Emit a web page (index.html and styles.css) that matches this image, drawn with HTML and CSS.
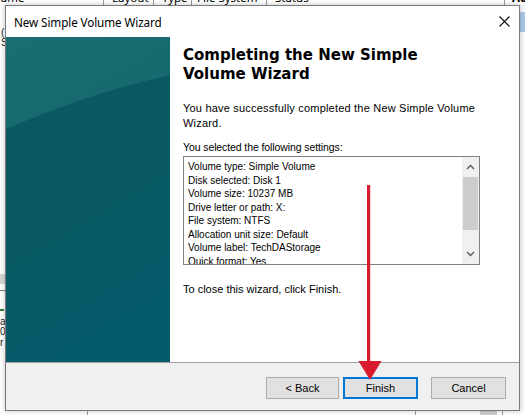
FILE: index.html
```html
<!DOCTYPE html>
<html>
<head>
<meta charset="utf-8">
<title>New Simple Volume Wizard</title>
<link rel="stylesheet" href="styles.css">
</head>
<body>
<div class="backdrop">
  <div class="lv-header">
    <div class="col c-name">Name</div>
    <div class="col c-layout">Layout</div>
    <div class="col c-type">Type</div>
    <div class="col c-fs">File System</div>
    <div class="col c-status">Status</div>
    <div class="col c-ac">Ac</div>
  </div>
  <div class="lv-body">
    <div class="left-strip">
      <span class="frag f-paren">(</span>
      <span class="frag f-s">S</span>
      <div class="gray-band"></div>
      <div class="dark-line"></div>
      <div class="green-dash"></div>
      <span class="frag f-a">a</span>
      <span class="frag f-0">0.</span>
      <span class="frag f-r">r</span>
    </div>
    <div class="center-fill"></div>
    <div class="right-strip">
      <div class="sel"></div>
    </div>
  </div>
  <div class="lv-bottom">
    <div class="bcell b1"></div>
    <div class="bcell b2"></div>
    <div class="bcell b3"><div class="bblock"></div></div>
    <div class="bcell b4"></div>
  </div>
</div>

<div class="dialog">
  <div class="titlebar">
    <span class="title">New Simple Volume Wizard</span>
    <svg class="close" width="11" height="11" viewBox="0 0 11 11">
      <path d="M0.5 0.5 L10.5 10.5 M10.5 0.5 L0.5 10.5" stroke="#111" stroke-width="1.1" fill="none"/>
    </svg>
  </div>
  <div class="main">
    <div class="side">
      <svg width="164" height="325" viewBox="0 0 164 325">
        <defs>
          <linearGradient id="lower" x1="0" y1="0" x2="0.3" y2="1">
            <stop offset="0" stop-color="#0c5962"/>
            <stop offset="0.6" stop-color="#085963"/>
            <stop offset="1" stop-color="#065b6b"/>
          </linearGradient>
          <linearGradient id="upper" x1="0" y1="0" x2="1" y2="1">
            <stop offset="0" stop-color="#1a6e72"/>
            <stop offset="1" stop-color="#15686d"/>
          </linearGradient>
        </defs>
        <rect width="164" height="325" fill="url(#lower)"/>
        <path d="M0 0 H164 V38 C120 48 70 62 0 92 Z" fill="url(#upper)"/>
      </svg>
    </div>
    <div class="content">
      <h1 class="heading">Completing the New Simple<br>Volume Wizard</h1>
      <p class="text p-done">You have successfully completed the New Simple Volume Wizard.</p>
      <p class="text p-sel">You selected the following settings:</p>
      <div class="listbox">
        <div class="items">
          <div>Volume type: Simple Volume</div>
          <div>Disk selected: Disk 1</div>
          <div>Volume size: 10237 MB</div>
          <div>Drive letter or path: X:</div>
          <div>File system: NTFS</div>
          <div>Allocation unit size: Default</div>
          <div>Volume label: TechDAStorage</div>
          <div>Quick format: Yes</div>
        </div>
        <div class="scrollbar">
          <div class="sb-btn">
            <svg width="9" height="6" viewBox="0 0 9 6"><path d="M1 5 L4.5 1.5 L8 5" stroke="#5a5a5a" stroke-width="1.4" fill="none"/></svg>
          </div>
          <div class="sb-track"><div class="sb-thumb"></div></div>
          <div class="sb-btn">
            <svg width="9" height="6" viewBox="0 0 9 6"><path d="M1 1 L4.5 4.5 L8 1" stroke="#5a5a5a" stroke-width="1.4" fill="none"/></svg>
          </div>
        </div>
      </div>
      <p class="text p-close">To close this wizard, click Finish.</p>
    </div>
  </div>
  <div class="footer">
    <button class="btn btn-back">&lt; Back</button>
    <button class="btn btn-finish">Finish</button>
    <button class="btn btn-cancel">Cancel</button>
  </div>
</div>

<svg class="arrow" width="525" height="415" viewBox="0 0 525 415">
  <rect x="367" y="185" width="3.2" height="178" fill="#d81c2e"/>
  <polygon points="358.5,361 381.5,361 370,380" fill="#d81c2e"/>
</svg>
</body>
</html>
```

FILE: styles.css
```css
html, body {
  margin: 0;
  padding: 0;
}

body {
  width: 525px;
  height: 415px;
  overflow: hidden;
  position: relative;
  background: #ffffff;
  font-family: "Liberation Sans", Arial, sans-serif;
}

/* ---------- background application window ---------- */
.backdrop {
  width: 525px;
  height: 415px;
  display: flex;
  flex-direction: column;
}

.lv-header {
  height: 5px;
  flex: none;
  display: flex;
  align-items: flex-end;
  overflow: hidden;
  background: #ffffff;
  font-family: "Noto Sans", "Open Sans", sans-serif;
  font-size: 11.5px;
  line-height: 14px;
  color: #000;
}

.col {
  flex: none;
  height: 14px;
  border-right: 1px solid #9a9a9a;
  box-sizing: border-box;
  white-space: nowrap;
  overflow: hidden;
}

.c-name { width: 112px; margin-left: -8px; }
.c-layout { width: 50px; padding-left: 8px; }
.c-type { width: 38px; padding-left: 8px; }
.c-fs { width: 75px; padding-left: 5px; }
.c-status { width: 238px; padding-left: 8px; }
.c-ac { width: 30px; padding-left: 7px; border-right: none; font-weight: bold; }

.lv-body {
  flex: 1;
  display: flex;
}

.left-strip {
  width: 5px;
  flex: none;
  display: flex;
  flex-direction: column;
  overflow: hidden;
  font-size: 10px;
  line-height: 10px;
  color: #222;
}

.frag { display: block; white-space: nowrap; }
.f-paren { margin-top: 23px; margin-left: 1px; }
.f-s { margin-top: 0; margin-left: 1px; }
.gray-band { height: 10px; background: #d6d6d6; margin-top: 226px; }
.dark-line { height: 1px; background: #777; margin-top: 6px; }
.green-dash { height: 2px; width: 4px; background: #2e7d32; margin-top: 18px; }
.f-a { margin-top: 6px; }
.f-0 { margin-top: 0; }
.f-r { margin-top: 1px; }

.center-fill { flex: 1; }

.right-strip {
  width: 5px;
  flex: none;
  background: #fafafa;
}

.sel {
  height: 20px;
  margin-top: 7px;
  background: #a9c8e8;
}

.lv-bottom {
  height: 5px;
  flex: none;
  display: flex;
  background: #fff;
}

.bcell {
  box-sizing: border-box;
  border-right: 1px solid #9c9c9c;
}
.b1 { width: 88px; }
.b2 { width: 328px; }
.b3 { width: 87px; display: flex; justify-content: flex-end; }
.bblock { width: 17px; margin-right: 5px; background: #cfcfcf; }
.b4 { flex: 1; border-right: none; }

/* ---------- wizard dialog ---------- */
.dialog {
  position: absolute;
  left: 5px;
  top: 5px;
  width: 513px;
  height: 404px;
  border: 1px solid #7a7a7a;
  background: #ffffff;
  display: flex;
  flex-direction: column;
  box-shadow: 0 0 5px rgba(0, 0, 0, 0.25);
}

.titlebar {
  height: 31px;
  flex: none;
  display: flex;
  align-items: center;
  justify-content: space-between;
  padding-left: 8px;
  background: #ffffff;
}

.title {
  font-family: "Noto Sans", "Open Sans", sans-serif;
  font-size: 11.7px;
  color: #000;
  letter-spacing: -0.1px;
}

.close {
  margin-right: 9px;
}

.main {
  height: 325px;
  flex: none;
  display: flex;
}

.side {
  width: 164px;
  flex: none;
  height: 325px;
}

.side svg { display: block; }

.content {
  flex: 1;
  padding: 9px 0 0 13px;
  background: #ffffff;
}

.heading {
  margin: 0;
  font-family: "DejaVu Sans", Verdana, sans-serif;
  font-weight: bold;
  font-size: 15px;
  line-height: 19px;
  color: #000;
}

.text {
  margin: 0;
  font-size: 11px;
  line-height: 14px;
  color: #000;
}

.p-done {
  margin-top: 17px;
  width: 305px;
  line-height: 15px;
  letter-spacing: 0.2px;
}

.p-sel {
  margin-top: 9px;
  font-size: 10.5px;
  letter-spacing: -0.1px;
}

.p-close { margin-top: 17px; }

.listbox {
  margin-top: 2px;
  width: 295px;
  height: 107px;
  border: 1px solid #828282;
  display: flex;
  overflow: hidden;
}

.items {
  flex: 1;
  padding: 3px 0 0 4px;
  font-size: 10px;
  line-height: 13.5px;
  color: #000;
  white-space: nowrap;
  overflow: hidden;
}

.scrollbar {
  width: 17px;
  flex: none;
  display: flex;
  flex-direction: column;
  background: #f0f0f0;
}

.sb-btn {
  height: 20px;
  flex: none;
  display: flex;
  align-items: center;
  justify-content: center;
}

.sb-track {
  flex: 1;
  padding: 0 1px;
}

.sb-thumb {
  height: 53px;
  background: #cdcdcd;
}

.footer {
  flex: 1;
  border-top: 1px solid #a0a0a0;
  background: #f0f0f0;
  display: flex;
  justify-content: flex-end;
  align-items: flex-start;
  padding: 14px 13px 0 0;
}

.btn {
  height: 22px;
  width: 75px;
  padding: 0;
  margin: 0;
  background: #e1e1e1;
  border: 1px solid #adadad;
  font-family: "Liberation Sans", Arial, sans-serif;
  font-size: 11px;
  color: #000;
  box-sizing: border-box;
}

.btn-back { width: 73px; margin-right: 4px; }
.btn-finish {
  border-color: #0078d7;
  box-shadow: inset 0 0 0 1px #0078d7;
  margin-right: 13px;
}

/* ---------- annotation overlay ---------- */
.arrow {
  position: absolute;
  left: 0;
  top: 0;
  pointer-events: none;
}
```
